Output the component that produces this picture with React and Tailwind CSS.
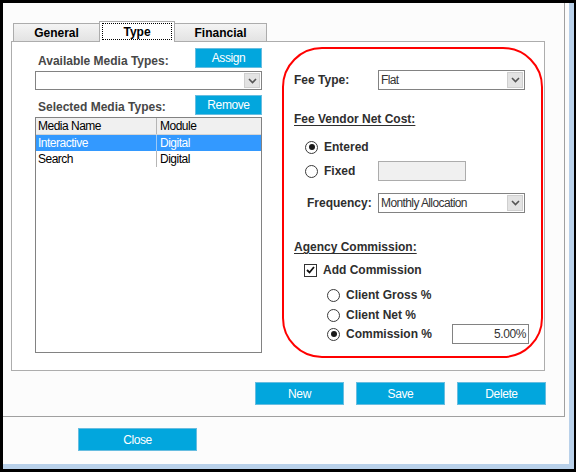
import React from "react";

function Chevron() {
  return (
    <svg width="9" height="6" viewBox="0 0 9 6">
      <path d="M1 1 L4.5 4.5 L8 1" fill="none" stroke="#555" strokeWidth="1.6" />
    </svg>
  );
}

function Select({ value, className }) {
  return (
    <div className={`flex items-center bg-white border border-[#828282] ${className}`}>
      <span className="flex-1 pl-[2px] text-[12px] tracking-[-0.6px] text-[#333] leading-none font-normal">
        {value}
      </span>
      <span className="w-[16px] self-stretch my-px mr-px flex items-center justify-center bg-[#e3e3e3] border border-[#cfcfcf]">
        <Chevron />
      </span>
    </div>
  );
}

function Btn({ children, className }) {
  return (
    <button
      type="button"
      className={`flex items-center justify-center bg-[#02a6dd] border border-[#67bde0] text-white text-[12px] tracking-[-0.4px] leading-none ${className}`}
    >
      {children}
    </button>
  );
}

function Radio({ checked }) {
  return (
    <span className="w-[13px] h-[13px] shrink-0 rounded-full border border-[#3a3a3a] bg-white flex items-center justify-center">
      {checked && <span className="w-[6px] h-[6px] rounded-full bg-[#1a1a1a]" />}
    </span>
  );
}

function Check() {
  return (
    <span className="w-[13px] h-[13px] shrink-0 border border-[#333] bg-white flex items-center justify-center">
      <svg width="9" height="8" viewBox="0 0 9 8">
        <path d="M1 4 L3.5 6.5 L8 1" fill="none" stroke="#111" strokeWidth="1.8" />
      </svg>
    </span>
  );
}

function Tab({ label, className }) {
  return (
    <div
      className={`h-[18px] flex items-center justify-center border-t border-[#acacac] bg-gradient-to-b from-[#f4f4f4] to-[#e3e3e3] text-[12px] font-bold text-black ${className}`}
    >
      {label}
    </div>
  );
}

export default function App() {
  return (
    <div className="w-[576px] h-[472px] bg-black pt-[3px] pl-[3px] pr-[2px] pb-[3px] font-['Liberation_Sans',Arial,sans-serif]">
      <div className="h-full flex flex-col bg-[#fcfcfc] border-r-[5px] border-b-[5px] border-[#b9d1ea]">
        {/* main area */}
        <div className="w-[562px] h-[414px] shrink-0 border-r border-b border-[#a0a0a0] pl-[8px]">
          {/* tabs */}
          <div className="h-[38px] flex items-end pl-[2px]">
            <Tab label="General" className="w-[86px] border-l" />
            <div className="relative z-10 w-[76px] h-[21px] -mb-px bg-white border-l border-t border-r border-[#acacac] flex flex-col items-center">
              <span className="mt-[1px] w-[70px] h-[17px] border border-dotted border-black flex items-center justify-center text-[12px] font-bold text-black">
                Type
              </span>
            </div>
            <Tab label="Financial" className="w-[92px] border-r" />
          </div>

          {/* panel */}
          <div className="w-[534px] h-[330px] border border-[#adadad] bg-white flex">
            {/* left column */}
            <div className="w-[227px] ml-[23px] flex flex-col">
              <div className="mt-[6px] h-[20px] flex items-end justify-between">
                <span className="pl-[3px] text-[12px] leading-[14px] font-bold text-[#474747]">
                  Available Media Types:
                </span>
                <Btn className="w-[67px] h-[20px]">Assign</Btn>
              </div>
              <Select value="" className="mt-[3px] h-[19px]" />
              <div className="mt-[5px] h-[20px] flex items-end justify-between">
                <span className="pl-[3px] pb-[1px] text-[12px] leading-[14px] font-bold text-[#474747]">
                  Selected Media Types:
                </span>
                <Btn className="w-[67px] h-[20px]">Remove</Btn>
              </div>
              <div className="mt-[2px] h-[236px] border border-[#828282] bg-white text-[12px] tracking-[-0.5px] leading-none">
                <div className="h-[17px] flex bg-[#f0f0f0] border-b border-[#d5d5d5] text-black">
                  <span className="w-[121px] pl-[2px] flex items-center border-r border-[#b5b5b5]">Media Name</span>
                  <span className="pl-[3px] flex items-center">Module</span>
                </div>
                <div className="h-[16px] flex bg-[#3399ff] text-white">
                  <span className="w-[121px] pl-[2px] flex items-center border-r border-[#9cc9f7]">Interactive</span>
                  <span className="pl-[3px] flex items-center">Digital</span>
                </div>
                <div className="h-[16px] flex text-black">
                  <span className="w-[121px] pl-[2px] flex items-center border-r border-[#b5b5b5]">Search</span>
                  <span className="pl-[3px] flex items-center">Digital</span>
                </div>
              </div>
            </div>

            {/* right red box */}
            <div className="mt-[5px] ml-[20px] w-[261px] h-[311px] border-2 border-[#f00] rounded-[40px] pl-[10px] pt-[21px] flex flex-col text-[12px] font-bold text-[#2e2e2e]">
              <div className="h-[20px] flex items-center">
                <span className="w-[84px]">Fee Type:</span>
                <Select value="Flat" className="w-[147px] h-[20px]" />
              </div>

              <div className="mt-[22px] h-[14px] leading-[14px] underline underline-offset-2">Fee Vendor Net Cost:</div>

              <div className="mt-[14px] h-[14px] flex items-center pl-[11px] gap-[6px]">
                <Radio checked />
                <span>Entered</span>
              </div>

              <div className="mt-[7px] h-[20px] flex items-center pl-[11px]">
                <span className="w-[73px] flex items-center gap-[6px]">
                  <Radio />
                  <span>Fixed</span>
                </span>
                <span className="w-[88px] h-[20px] bg-[#f0f0f0] border border-[#acacac]" />
              </div>

              <div className="mt-[12px] h-[20px] flex items-center pl-[13px]">
                <span className="w-[71px]">Frequency:</span>
                <Select value="Monthly Allocation" className="w-[147px] h-[20px]" />
              </div>

              <div className="mt-[27px] h-[14px] leading-[14px] underline underline-offset-2">Agency Commission:</div>

              <div className="mt-[9px] h-[14px] flex items-center pl-[10px] gap-[6px]">
                <Check />
                <span>Add Commission</span>
              </div>

              <div className="mt-[11px] h-[14px] flex items-center pl-[33px] gap-[6px]">
                <Radio />
                <span>Client Gross %</span>
              </div>

              <div className="mt-[6px] h-[14px] flex items-center pl-[33px] gap-[6px]">
                <Radio />
                <span>Client Net %</span>
              </div>

              <div className="mt-[2px] h-[20px] flex items-center pl-[33px]">
                <span className="w-[125px] flex items-center gap-[6px]">
                  <Radio checked />
                  <span>Commission %</span>
                </span>
                <span className="w-[77px] h-[20px] bg-white border border-[#828282] flex items-center justify-end pr-[2px] font-normal text-[12px] tracking-[-0.4px] text-[#333]">
                  5.00%
                </span>
              </div>
            </div>
          </div>

          {/* action buttons */}
          <div className="mt-[11px] flex justify-end gap-[12px] pr-[18px]">
            <Btn className="w-[89px] h-[23px]">New</Btn>
            <Btn className="w-[89px] h-[23px]">Save</Btn>
            <Btn className="w-[89px] h-[23px]">Delete</Btn>
          </div>
        </div>

        {/* close */}
        <div className="pl-[75px] pt-[11px]">
          <Btn className="w-[119px] h-[23px]">Close</Btn>
        </div>
      </div>
    </div>
  );
}
